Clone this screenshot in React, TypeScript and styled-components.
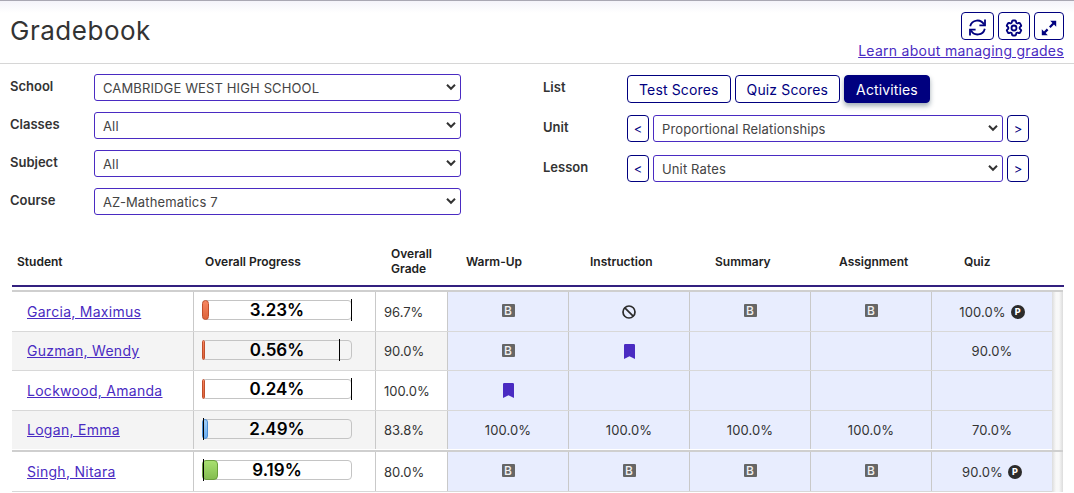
import React from "react";
import styled, { createGlobalStyle, css } from "styled-components";
import { HiOutlineCog6Tooth } from "react-icons/hi2";

const navy = "#00007f";
const violet = "#4a2bc2";
const ink = "#333333";

const GlobalStyle = createGlobalStyle`
  * { box-sizing: border-box; }
  body {
    margin: 0;
    background: #fff;
    color: ${ink};
    font-family: Inter, "Liberation Sans", sans-serif;
    font-size: 13px;
  }
`;

const Page = styled.main`
  border-top: 1px solid #a9a7b3;
  background: linear-gradient(#f4f3fa, #fff 12px);
`;

const Header = styled.header`
  display: flex;
  justify-content: space-between;
  align-items: flex-start;
  padding: 11px 10px 0;
  height: 63px;
  border-bottom: 1px solid #d6d6d6;
`;

const Title = styled.h1`
  margin: 3px 0 0;
  font-size: 26px;
  line-height: 32px;
  font-weight: 400;
  letter-spacing: 0.02em;
`;

const HeaderSide = styled.div`
  display: flex;
  flex-direction: column;
  align-items: flex-end;
`;

const IconBar = styled.div`
  display: flex;
  gap: 4px;
`;

const outlined = css`
  display: inline-flex;
  align-items: center;
  justify-content: center;
  padding: 0;
  border: 1px solid ${navy};
  border-radius: 4px;
  background: #fff;
  color: ${navy};
  font-family: inherit;
  cursor: pointer;
`;

const IconButton = styled.button<{ $width: number }>`
  ${outlined}
  width: ${(p) => p.$width}px;
  height: 28px;
  padding-top: 3px;
`;

const HelpLink = styled.a`
  color: ${violet};
  font-size: 14px;
  line-height: 22px;
  letter-spacing: 0.02em;
`;

const Filters = styled.form`
  display: grid;
  grid-template-columns: 1fr 1fr;
  column-gap: 2px;
  padding: 10px 0 0 10px;
`;

const LeftFilters = styled.div`
  display: flex;
  flex-direction: column;
  gap: 11px;
  padding-right: 80px;
`;

const RightFilters = styled.div`
  display: flex;
  flex-direction: column;
  gap: 12px;
  padding: 1px 45px 0 0;
`;

const Field = styled.div`
  display: grid;
  grid-template-columns: 84px 1fr;
  align-items: start;
`;

const WideField = styled(Field)`
  min-height: 28px;
`;

const Label = styled.label`
  font-size: 13px;
  line-height: 25px;
  font-weight: 600;
`;

const SelectWrap = styled.div`
  position: relative;
  flex: 1;
  display: flex;
`;

const Select = styled.select`
  appearance: none;
  width: 100%;
  height: 27px;
  margin: 0;
  padding: 0 24px 0 8px;
  border: 1px solid ${violet};
  border-radius: 3px;
  background: #fff;
  color: #444;
  font-family: inherit;
  font-size: 13px;
  letter-spacing: 0.01em;
`;

const Chevron = styled.svg`
  position: absolute;
  right: 5px;
  top: 9px;
  pointer-events: none;
`;

const ButtonRow = styled.div`
  display: flex;
  gap: 4px;
`;

const ListButton = styled.button<{ $active?: boolean }>`
  ${outlined}
  height: 28px;
  padding: 0 11px;
  font-size: 14px;
  letter-spacing: 0.01em;
  ${(p) =>
    p.$active &&
    css`
      background: ${navy};
      color: #fff;
      box-shadow: 0 3px 5px rgba(20, 50, 70, 0.4);
    `}
`;

const StepButton = styled.button`
  ${outlined}
  width: 22px;
  height: 27px;
  font-size: 13px;
`;

const Table = styled.table`
  display: block;
  margin: 22px 10px 0 12px;
`;

const Head = styled.thead`
  display: block;
  border-bottom: 2px solid #33207f;
  margin-bottom: 3px;
`;

const HeadRow = styled.tr`
  display: grid;
  grid-template-columns: 188fr 186fr 75fr 124fr 125fr 124fr 125fr 105fr;
  align-items: center;
  min-height: 48px;
`;

const HeadCell = styled.th`
  padding: 0 22px 0 5px;
  text-align: left;
  font-size: 12px;
  line-height: 15px;
  font-weight: 600;
  color: #222;
`;

const Body = styled.tbody`
  display: block;
  margin-right: 1px;
  padding-right: 11px;
  border-top: 2px solid #cfcfcf;
  background: linear-gradient(90deg, #dcdcdc, #f8f8f8 4px, #f8f8f8 7px, #dcdcdc) right / 11px 100% no-repeat;
`;

const Row = styled.tr`
  display: grid;
  grid-template-columns: 182fr 182fr 72fr 121fr 121fr 121fr 121fr 120fr;
  height: 40px;
  border-bottom: 1px solid #d8d8d8;
  background: #fff;
  &:nth-child(even) {
    height: 39px;
    background: #f4f4f4;
  }
  &:nth-child(4) {
    border-bottom-color: #fff;
  }
`;

const cell = css`
  display: flex;
  align-items: center;
  padding: 0 8px;
  border-right: 1px solid #c9c9c9;
  font-size: 13px;
  line-height: 18px;
  font-weight: 400;
`;

const NameCell = styled.th`
  ${cell}
  padding-left: 15px;
`;

const ProgressCell = styled.td`
  ${cell}
  padding-bottom: 3px;
`;

const GradeCell = styled.td`
  ${cell}
`;

const ScoreCell = styled.td`
  ${cell}
  justify-content: center;
  gap: 5px;
  background: #e8edfe;
  letter-spacing: 0.01em;
  &:last-child {
    border-right: 0;
  }
`;

const StudentLink = styled.a`
  color: ${violet};
  font-size: 14px;
  letter-spacing: 0.02em;
`;

const Bar = styled.div`
  position: relative;
  display: flex;
  align-items: center;
  justify-content: center;
  width: 150px;
  height: 20px;
  border: 1px solid #c4c4c4;
  border-radius: 4px;
`;

const tones = {
  red: css`
    background: linear-gradient(#f78660, #dd643c);
    border-color: #c04f2c;
  `,
  blue: css`
    background: linear-gradient(#a5d0f8, #6aaef0);
    border-color: #4d8fd6;
  `,
  green: css`
    background: linear-gradient(#a8e070, #84bd50);
    border-color: #6a9e3c;
  `,
};

const Fill = styled.span<{ $tone: keyof typeof tones }>`
  position: absolute;
  box-sizing: content-box;
  left: -1px;
  top: -1px;
  bottom: -1px;
  min-width: 1px;
  border: 1px solid;
  border-radius: 4px;
  ${(p) => tones[p.$tone]}
`;

const Marker = styled.span`
  position: absolute;
  top: -2px;
  bottom: -2px;
  width: 1px;
  background: #000;
`;

const Percent = styled.span`
  position: relative;
  color: #000;
  font-size: 17px;
  line-height: 18px;
  font-weight: 600;
`;

const Badge = styled.span`
  width: 13px;
  height: 13px;
  margin-bottom: 2px;
  border-radius: 1px;
  background: #666;
  color: #f2f2f2;
  font-size: 12px;
  line-height: 13px;
  font-weight: 500;
  text-align: center;
`;

const RoundBadge = styled.span`
  width: 14px;
  height: 14px;
  border-radius: 50%;
  background: #2b2b2b;
  color: #fff;
  font-size: 9px;
  line-height: 14px;
  font-weight: 800;
  text-align: center;
`;

type Score = "" | "B" | "ban" | "mark" | string;

interface Student {
  name: string;
  progress: number;
  target: number;
  tone: keyof typeof tones;
  grade: string;
  scores: Score[];
}

const upper: Student[] = [
  { name: "Garcia, Maximus", progress: 3.23, target: 100, tone: "red", grade: "96.7%", scores: ["B", "ban", "B", "B", "100.0% P"] },
  { name: "Guzman, Wendy", progress: 0.56, target: 92, tone: "red", grade: "90.0%", scores: ["B", "mark", "", "", "90.0%"] },
  { name: "Lockwood, Amanda", progress: 0.24, target: 100, tone: "red", grade: "100.0%", scores: ["mark", "", "", "", ""] },
  { name: "Logan, Emma", progress: 2.49, target: 0, tone: "blue", grade: "83.8%", scores: ["100.0%", "100.0%", "100.0%", "100.0%", "70.0%"] },
];

const lower: Student[] = [
  { name: "Singh, Nitara", progress: 9.19, target: 0, tone: "green", grade: "80.0%", scores: ["B", "B", "B", "B", "90.0% P"] },
];

const columns = ["Student", "Overall Progress", "Overall Grade", "Warm-Up", "Instruction", "Summary", "Assignment", "Quiz"];

function ScoreValue({ value }: { value: Score }) {
  if (value === "B") return <Badge>B</Badge>;
  if (value === "ban")
    return (
      <svg width="14" height="14" viewBox="0 0 14 14" fill="none" stroke="#2b2b2b" strokeWidth="1.7" role="img" aria-label="Blocked">
        <circle cx="7" cy="7" r="6" />
        <path d="M2.8 2.8 11.2 11.2" />
      </svg>
    );
  if (value === "mark")
    return (
      <svg width="11" height="15" viewBox="0 0 11 15" fill={violet} role="img" aria-label="Bookmarked">
        <path d="M0 1.2Q0 0 1.2 0H9.8Q11 0 11 1.2V15L5.5 12.3 0 15Z" />
      </svg>
    );
  if (value.endsWith(" P"))
    return (
      <>
        <span>{value.slice(0, -2)}</span>
        <RoundBadge>P</RoundBadge>
      </>
    );
  return <>{value}</>;
}

function StudentRow({ s }: { s: Student }) {
  return (
    <Row>
      <NameCell scope="row">
        <StudentLink href="#">{s.name}</StudentLink>
      </NameCell>
      <ProgressCell>
        <Bar role="progressbar" aria-valuenow={s.progress} aria-label={`${s.name} progress`}>
          <Fill $tone={s.tone} style={{ width: `${s.progress}%` }} />
          <Marker style={{ left: `${s.target}%` }} />
          <Percent>{s.progress}%</Percent>
        </Bar>
      </ProgressCell>
      <GradeCell>{s.grade}</GradeCell>
      {s.scores.map((v, i) => (
        <ScoreCell key={i}>
          <ScoreValue value={v} />
        </ScoreCell>
      ))}
    </Row>
  );
}

function Dropdown({ id, value }: { id: string; value: string }) {
  return (
    <SelectWrap>
      <Select id={id}>
        <option>{value}</option>
      </Select>
      <Chevron width="10" height="8" viewBox="0 0 10 8" fill="none" stroke="#333" strokeWidth="2">
        <path d="M1 1.8 5 5.8 9 1.8" />
      </Chevron>
    </SelectWrap>
  );
}

function Stepper({ id, label, value }: { id: string; label: string; value: string }) {
  return (
    <WideField>
      <Label htmlFor={id}>{label}</Label>
      <ButtonRow>
        <StepButton type="button" aria-label={`Previous ${label}`}>&lt;</StepButton>
        <Dropdown id={id} value={value} />
        <StepButton type="button" aria-label={`Next ${label}`}>&gt;</StepButton>
      </ButtonRow>
    </WideField>
  );
}

const leftFields = [
  ["School", "CAMBRIDGE WEST HIGH SCHOOL"],
  ["Classes", "All"],
  ["Subject", "All"],
  ["Course", "AZ-Mathematics 7"],
];

export default function App() {
  return (
    <Page>
      <GlobalStyle />
      <Header>
        <Title>Gradebook</Title>
        <HeaderSide>
          <IconBar>
            <IconButton $width={33} aria-label="Refresh">
              <svg width="17" height="17" viewBox="0 0 17 17" fill="none" stroke="currentColor" strokeWidth="1.8">
                <path d="M1.2 7.2A7.4 7.4 0 0 1 15 5.6" />
                <path d="M16 0.4V6.4H10.4" />
                <path d="M15.8 9.8A7.4 7.4 0 0 1 2 11.4" />
                <path d="M1 16.6V10.6H6.6" />
              </svg>
            </IconButton>
            <IconButton $width={32} aria-label="Settings">
              <HiOutlineCog6Tooth size={20} strokeWidth={2.2} />
            </IconButton>
            <IconButton $width={30} aria-label="Expand">
              <svg width="16" height="16" viewBox="0 0 16 16" fill="currentColor">
                <path d="M9.2 0.8H15.2V6.8L13 4.6 9.6 8 8 6.4 11.4 3Z" />
                <path d="M6.8 15.2H0.8V9.2L3 11.4 5.8 8.6 7.4 10.2 4.6 13Z" />
              </svg>
            </IconButton>
          </IconBar>
          <HelpLink href="#">Learn about managing grades</HelpLink>
        </HeaderSide>
      </Header>
      <Filters>
        <LeftFilters>
          {leftFields.map(([label, value]) => (
            <Field key={label}>
              <Label htmlFor={label}>{label}</Label>
              <Dropdown id={label} value={value} />
            </Field>
          ))}
        </LeftFilters>
        <RightFilters>
          <WideField role="group" aria-labelledby="list-label">
            <Label as="span" id="list-label">List</Label>
            <ButtonRow>
              <ListButton type="button">Test Scores</ListButton>
              <ListButton type="button">Quiz Scores</ListButton>
              <ListButton type="button" $active aria-pressed="true">Activities</ListButton>
            </ButtonRow>
          </WideField>
          <Stepper id="unit" label="Unit" value="Proportional Relationships" />
          <Stepper id="lesson" label="Lesson" value="Unit Rates" />
        </RightFilters>
      </Filters>
      <Table>
        <Head>
          <HeadRow>
            {columns.map((c) => (
              <HeadCell key={c} scope="col">{c}</HeadCell>
            ))}
          </HeadRow>
        </Head>
        <Body>
          {upper.map((s) => (
            <StudentRow key={s.name} s={s} />
          ))}
        </Body>
        <Body>
          {lower.map((s) => (
            <StudentRow key={s.name} s={s} />
          ))}
        </Body>
      </Table>
    </Page>
  );
}
